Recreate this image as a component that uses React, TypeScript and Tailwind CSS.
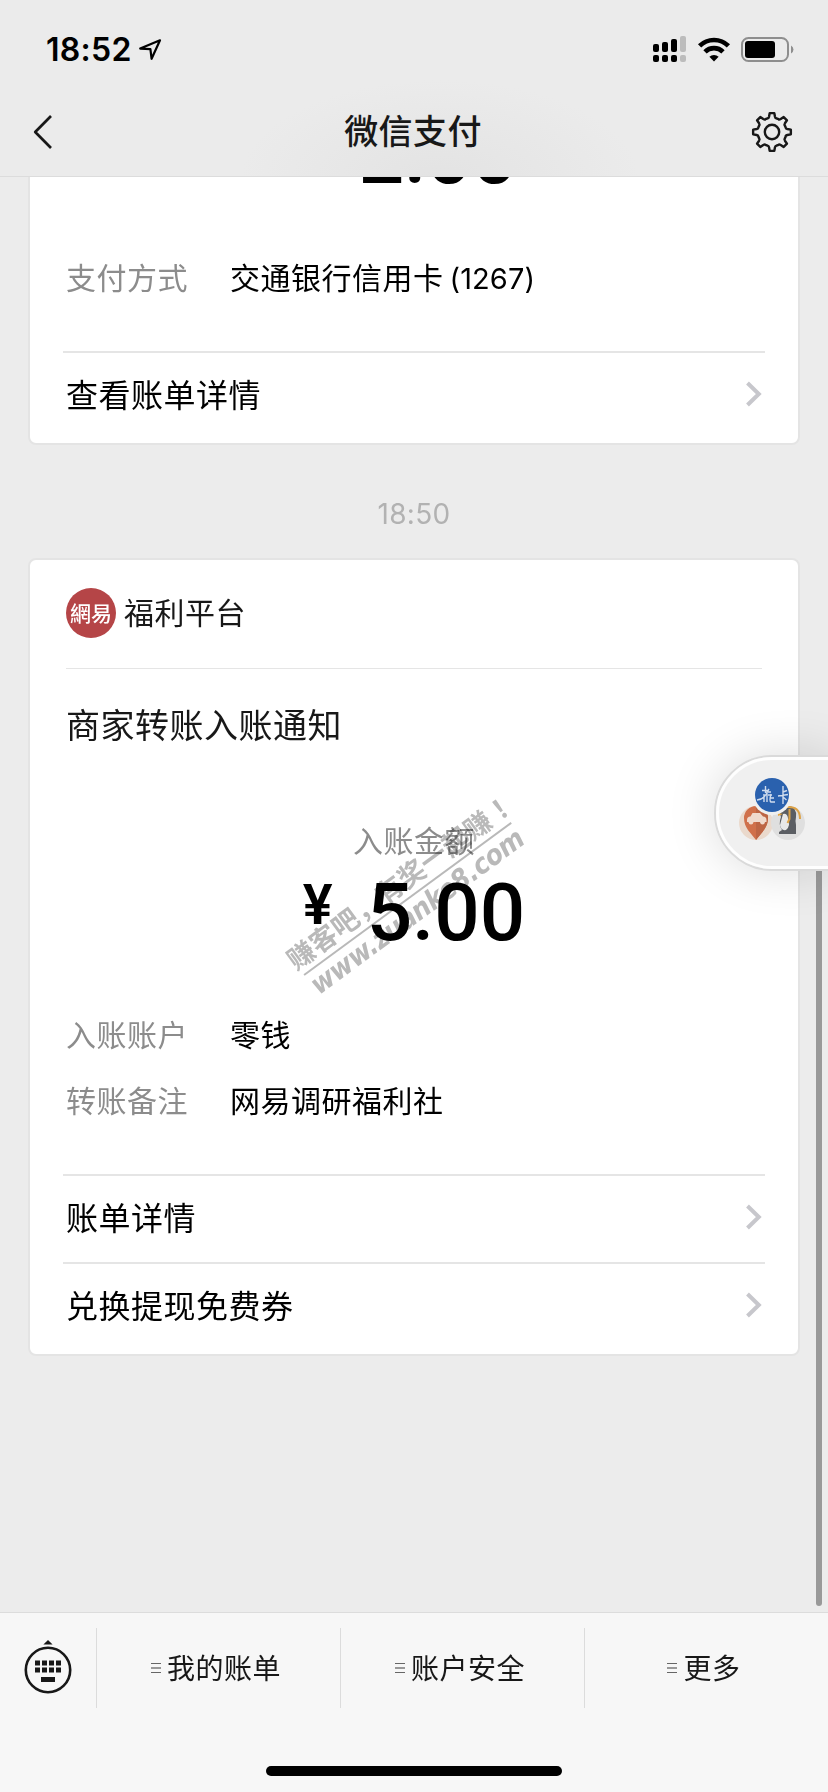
import type { ReactNode } from 'react';

interface Detail {
  label: string;
  value: ReactNode;
}

const MENU = ['我的账单', '账户安全', '更多'];

function polar(r: number, deg: number) {
  const a = (deg * Math.PI) / 180;
  return `${(21 + r * Math.sin(a)).toFixed(2)} ${(21 - r * Math.cos(a)).toFixed(2)}`;
}

const gearPath =
  Array.from({ length: 8 }, (_, i) => {
    const t = i * 45;
    return `${i === 0 ? 'M' : 'L'}${polar(19, t - 7)} L${polar(19, t + 7)} L${polar(15.6, t + 11)} Q${polar(14, t + 14)} ${polar(14.4, t + 18)} L${polar(14.4, t + 27)} Q${polar(14, t + 31)} ${polar(15.6, t + 34)}`;
  }).join(' ') + ' Z';

function StatusBar() {
  return (
    <div className="flex h-[88px] items-center pt-[11px] pl-[46px] pr-[33px]">
      <span className="text-[32px] leading-none font-semibold tracking-[0.3px] text-black">18:52</span>
      <svg className="ml-[6px] h-6 w-6" viewBox="0 0 24 24" fill="none" stroke="#000" strokeWidth="2.2" strokeLinejoin="round">
        <path d="M2.2 10.6 L22 2.3 L13.6 20.8 L12.4 11.2 Z" />
      </svg>
      <svg className="ml-auto h-[28px] w-[34px]" viewBox="0 0 34 28">
        <rect x="0" y="8" width="6" height="8" rx="2" />
        <rect x="9" y="6" width="6" height="10" rx="2" />
        <rect x="18" y="3" width="6" height="13" rx="2" />
        <rect x="27" y="0" width="6" height="16" rx="2" fill="#bcbcbc" />
        <rect x="0" y="19" width="6" height="7" rx="2" />
        <rect x="9" y="19" width="6" height="7" rx="2" />
        <rect x="18" y="19" width="6" height="7" rx="2" />
        <rect x="27" y="19" width="6" height="7" rx="2" fill="#bcbcbc" />
      </svg>
      <svg className="ml-[10px] h-[26px] w-[34px]" viewBox="0 0 34 26" fill="none" stroke="#000" strokeWidth="4.6">
        <path d="M2.6 8.9 A20.5 20.5 0 0 1 31.4 8.9" />
        <path d="M8 14.9 A12.6 12.6 0 0 1 26 14.9" />
        <path d="M12.4 19.8 A6.6 6.6 0 0 1 21.6 19.8 L17 24.4 Z" fill="#000" stroke="none" />
      </svg>
      <svg className="ml-[10px] h-[26px] w-[54px]" viewBox="0 0 54 26">
        <rect x="1" y="1" width="46" height="23" rx="6.5" fill="none" stroke="#8e8e8e" strokeWidth="2" />
        <rect x="4" y="4" width="30" height="17" rx="3" />
        <path d="M50 8.5 A4.5 4.5 0 0 1 50 16.5 Z" fill="#8e8e8e" />
      </svg>
    </div>
  );
}

function NavBar() {
  return (
    <div className="flex h-[88px] items-center justify-between pr-[35px] pl-[33px] text-[#181818]">
      <svg className="h-[36px] w-[42px]" viewBox="0 0 42 36" fill="none" stroke="currentColor" strokeWidth="2.7">
        <path d="M18 2 L2.2 18 L18 34" strokeLinejoin="round" />
      </svg>
      <h1 className="text-[34px] leading-none font-medium tracking-[0.4px]">微信支付</h1>
      <svg className="h-[42px] w-[42px]" viewBox="0 0 42 42" fill="none" stroke="currentColor" strokeWidth="2.4" strokeLinejoin="round">
        <path d={gearPath} />
        <circle cx="21" cy="21" r="7.2" />
      </svg>
    </div>
  );
}

function Amount({ value }: { value: string }) {
  return (
    <div className="flex h-20 justify-center font-[Roboto] leading-none text-black">
      <span className="mt-[4px] mr-[34px] text-[56px] leading-[56px] font-semibold">¥</span>
      <span className="text-[80px] leading-[80px] font-medium">{value}</span>
    </div>
  );
}

function Details({ items }: { items: Detail[] }) {
  return (
    <dl className="mt-[62px] mb-[53px] flex flex-col gap-[26px] px-9 text-[30px] leading-10 tracking-[0.5px]">
      {items.map(item => (
        <div key={item.label} className="flex h-10">
          <dt className="w-[164px] text-[#8c8c8c]">{item.label}</dt>
          <dd className="text-black">{item.value}</dd>
        </div>
      ))}
    </dl>
  );
}

function LinkRow({ children }: { children: ReactNode }) {
  return (
    <div className="mx-[33px] flex h-[88px] items-center justify-between border-t-2 border-[#e5e5e5] pr-[2px] pl-[3px]">
      <span className="text-[32px] leading-10 tracking-[0.5px] text-black">{children}</span>
      <svg className="mb-1 h-[26px] w-[18px]" viewBox="0 0 18 26" fill="none" stroke="#c7c7cc" strokeWidth="4">
        <path d="M2.5 2 L13.8 13 L2.5 24" />
      </svg>
    </div>
  );
}

function Watermark() {
  return (
    <div className="pointer-events-none absolute top-[305px] left-[249px] w-[257px] rotate-[-36.3deg] whitespace-nowrap text-[#b9b9b9] mix-blend-multiply">
      <div className="-ml-1 h-[33px] text-[27px] leading-[30px] font-bold tracking-[0.4px]">
        赚客吧，有奖一起赚<span className="font-['Noto_Sans_CJK_TC']">！</span>
      </div>
      <div className="h-[1.5px] bg-[#b9b9b9]" />
      <div className="h-[33px] font-['DejaVu_Sans_Condensed','DejaVu_Sans'] text-[28px] leading-[30px] font-bold italic tracking-[-0.4px]">
        www.zuanke8.com
      </div>
    </div>
  );
}

function FloatingBall() {
  return (
    <div className="absolute top-[755px] left-[714px] h-[116px] w-[120px] rounded-l-full border-2 border-[#dadada] bg-[#f0f0f0] shadow-[0_0_50px_rgba(0,0,0,0.14)]">
      <div className="h-full w-full rounded-l-full border-[3px] border-white/90">
        <svg className="mt-[14px] ml-[16px] h-[70px] w-[72px]" viewBox="0 0 72 70">
          <circle cx="21" cy="49" r="17" fill="#ead9cc" />
          <path d="M21 66 C16 59 9 54 9 44 A12 12 0 0 1 33 44 C33 54 26 59 21 66Z" fill="#d0704a" />
          <path d="M21 32 A12 12 0 0 1 33 44 C33 54 26 59 21 66Z" fill="#bd6544" />
          <path d="M12 46 q0-3.5 3.5-3.5 l2-3.5 h7.5 l3 3.5 q3.5 .4 3.5 3.5 v2 H12Z" fill="#f0dacd" />
          <circle cx="16" cy="48.2" r="2.3" fill="#f0dacd" />
          <circle cx="27.5" cy="48.2" r="2.3" fill="#f0dacd" />
          <circle cx="53" cy="49" r="17" fill="#dfdfdf" />
          <path d="M45 40 q1-8 9-8 q8 1 7 11 q-1 4 0 8 v9 H44 v-2 l3-2 q-4-6-1-13Z" fill="#5b5e63" />
          <path d="M48 40 q4-1 5 4 q3 8-2 12 q-5 1-6-5Z" fill="#e8e8e8" />
          <path d="M43 39 l5 1 -5 2Z" fill="#e5a43e" />
          <path d="M54.5 35 v10 l-2 4 M52 33 q13-1 13 12" fill="none" stroke="#dda246" strokeWidth="2" />
          <circle cx="37" cy="21" r="20" fill="#f0f0f0" />
          <circle cx="37" cy="21" r="17" fill="#2a61ae" />
          <path d="M30.5 12 v7 M27 16.5 h6 M32 19 q-4 7-10 7 M29 20 v8 M32 19 v9 M34 15 l-2 3 l4 0 M33 21 h4 M36 20 q-2 7 0 8 h4 M35 24 h4 M48 12 v18 M48 18 l4-1.5 M43 22 l10-1.5 M48 23 l3.5 3" fill="none" stroke="#cfdcee" strokeWidth="1.4" />
        </svg>
      </div>
    </div>
  );
}

function KeyboardIcon() {
  return (
    <svg className="h-[56px] w-[48px]" viewBox="0 0 48 56" fill="#181818">
      <path d="M24 1 L28.6 5.6 H19.4Z" />
      <circle cx="24" cy="31" r="22.2" fill="none" stroke="#181818" strokeWidth="2.6" />
      {[11, 18, 25, 32].map(x => (
        <g key={x}>
          <rect x={x} y="21.5" width="5" height="5" />
          <rect x={x} y="28.5" width="5" height="5" />
        </g>
      ))}
      <rect x="17" y="38" width="14" height="5" />
    </svg>
  );
}

function BottomBar() {
  return (
    <footer className="h-[180px] border-t border-[#dcdcdc] bg-[#f7f7f7]">
      <div className="flex h-[95px] items-end">
        <div className="flex h-20 w-[96px] items-center justify-center pb-[3px]">
          <KeyboardIcon />
        </div>
        {MENU.map(item => (
          <div key={item} className="flex h-20 flex-1 items-center justify-center gap-[6px] border-l border-[#dcdcdc] pr-[5px] text-[#181818]">
            <svg className="h-[12px] w-[10px]" viewBox="0 0 10 12">
              <path d="M0 1.5h10M0 10.5h10" stroke="#666" strokeWidth="1" />
              <path d="M0 6h10" stroke="#999" strokeWidth="2" />
            </svg>
            <span className="pt-[2px] text-[28px] leading-10 tracking-[0.5px]">{item}</span>
          </div>
        ))}
      </div>
      <div className="mx-auto mt-[58px] h-[10px] w-[296px] rounded-full bg-black" />
    </footer>
  );
}

export default function App() {
  const card = (
    <>
      交通银行信用卡<span className="ml-[6px] text-[29px] tracking-[0.1px]">(1267)</span>
    </>
  );

  return (
    <div className="relative flex h-[1792px] w-[828px] flex-col overflow-hidden bg-[#ececec] font-['Inter','Noto_Sans_CJK_SC',sans-serif]">
      <header className="z-10 h-[177px] shrink-0 border-b border-[#dcdcdc] bg-[#ebebeb] bg-[radial-gradient(ellipse_200px_100px_at_440px_180px,#e3e3e3,#ebebeb)]">
        <StatusBar />
        <NavBar />
      </header>

      <main className="flex-1 overflow-hidden px-7">
        <section className="-mt-[100px] rounded-lg border-2 border-[#e4e4e4] bg-white pt-[37px] pb-1">
          <div className="pr-4">
            <Amount value="2.00" />
          </div>
          <Details items={[{ label: '支付方式', value: card }]} />
          <LinkRow>查看账单详情</LinkRow>
        </section>

        <time className="flex h-[113px] items-center justify-center pt-[25px] text-[28px] tracking-[0.3px] text-[#b2b2b2]">18:50</time>

        <section className="relative rounded-lg border-2 border-[#e4e4e4] bg-white pb-1">
          <div className="mx-9 flex h-[109px] items-center gap-2 border-b border-[#e5e5e5] pb-[2px] text-[#181818]">
            <div className="flex h-[50px] w-[50px] items-center justify-center rounded-full bg-[#b54547] font-['Noto_Sans_CJK_TC'] text-[21px] font-medium text-white">
              網易
            </div>
            <span className="text-[30px] leading-10 tracking-[0.5px]">福利平台</span>
          </div>
          <h2 className="mt-[37px] h-10 px-9 text-[34px] leading-10 tracking-[0.5px] text-[#181818]">商家转账入账通知</h2>
          <p className="mt-[75px] mb-3 h-10 text-center text-[30px] leading-10 tracking-[0.5px] text-[#8c8c8c]">入账金额</p>
          <Amount value="5.00" />
          <Details
            items={[
              { label: '入账账户', value: '零钱' },
              { label: '转账备注', value: '网易调研福利社' },
            ]}
          />
          <LinkRow>账单详情</LinkRow>
          <LinkRow>兑换提现免费券</LinkRow>
          <Watermark />
        </section>
      </main>

      <BottomBar />

      <div className="absolute top-[840px] left-[816px] h-[766px] w-[6px] rounded-full bg-[#999]" />
      <FloatingBall />
    </div>
  );
}
